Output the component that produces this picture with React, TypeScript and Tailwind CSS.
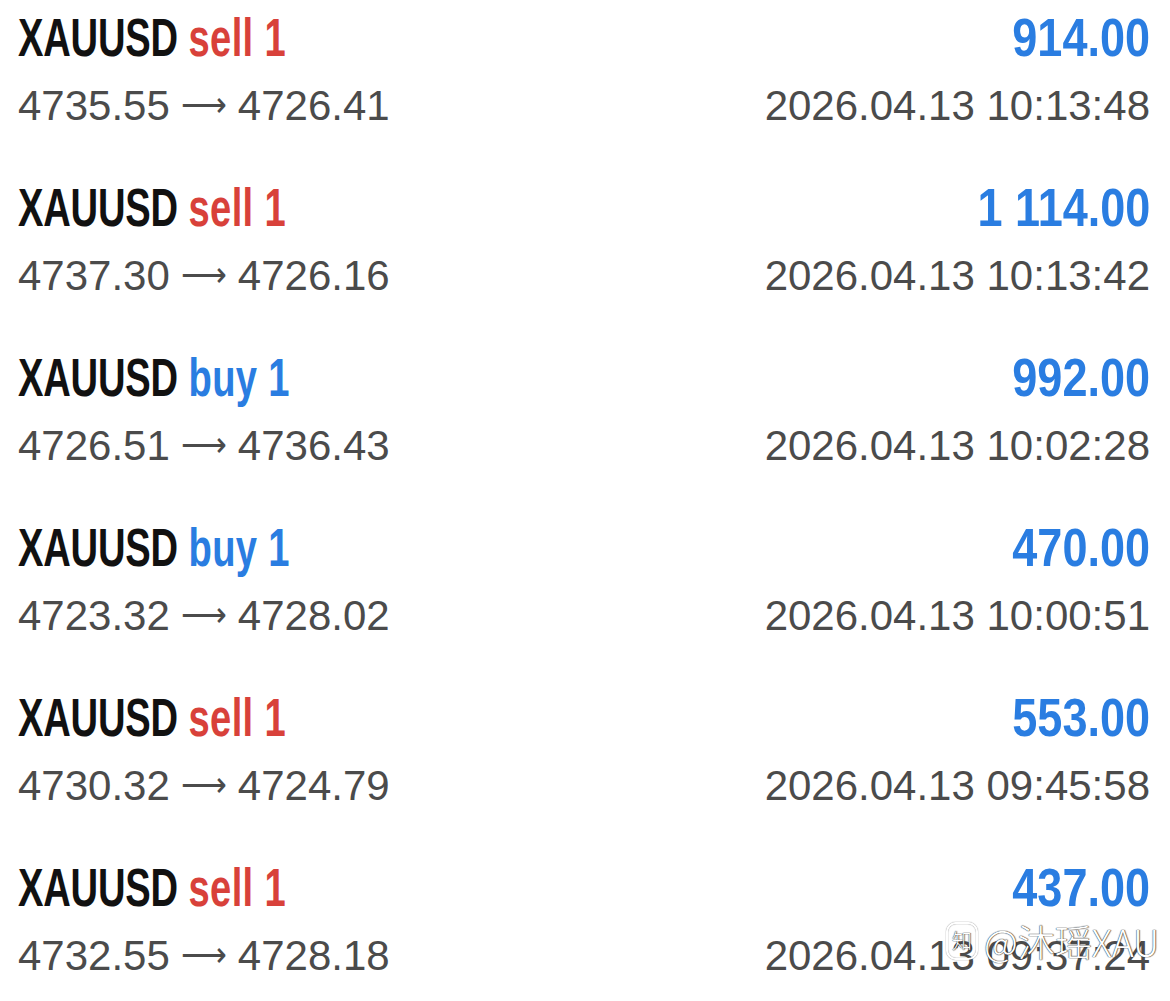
import React from "react";

const DEALS = [
  { side: "sell", open: "4735.55", close: "4726.41", profit: "914.00", time: "2026.04.13 10:13:48" },
  { side: "sell", open: "4737.30", close: "4726.16", profit: "1 114.00", time: "2026.04.13 10:13:42" },
  { side: "buy", open: "4726.51", close: "4736.43", profit: "992.00", time: "2026.04.13 10:02:28" },
  { side: "buy", open: "4723.32", close: "4728.02", profit: "470.00", time: "2026.04.13 10:00:51" },
  { side: "sell", open: "4730.32", close: "4724.79", profit: "553.00", time: "2026.04.13 09:45:58" },
  { side: "sell", open: "4732.55", close: "4728.18", profit: "437.00", time: "2026.04.13 09:37:24" },
];

const bold = "font-['Liberation_Sans',Arial,sans-serif] font-bold";
const regular = "font-['Liberation_Sans',Arial,sans-serif]";

export default function App() {
  return (
    <div className="relative w-[1170px] h-[1001px] overflow-hidden bg-white">
      <div className="flex flex-col pl-[18px] pr-[20px]">
        {DEALS.map((d, i) => (
          <div key={i} className="h-[170px] flex flex-col">
            <div className="flex items-baseline justify-between h-[76px] pt-[2px]">
              {/* condensed title: no narrow face installed, so squeeze the bold one */}
              <div className={`${bold} text-[53px] leading-[72px] inline-block origin-left scale-x-[0.72] whitespace-nowrap`}>
                <span className="text-[#111111] tracking-[-0.3px]">XAUUSD</span>{" "}
                <span className={d.side === "sell" ? "text-[#d8413a] tracking-[0.5px]" : "text-[#2a7de1] tracking-[0.5px]"}>
                  {d.side} 1
                </span>
              </div>
              <div className={`${bold} text-[53px] leading-[72px] text-[#2a7de1] inline-block origin-right scale-x-[0.85] whitespace-nowrap`}>
                {d.profit}
              </div>
            </div>
            <div className={`flex items-baseline justify-between ${regular} text-[42px] leading-[60px] text-[#4b4b4b]`}>
              <span className="whitespace-nowrap">
                {d.open}
                <span className="relative -top-[4px] font-['DejaVu_Sans',sans-serif] font-extralight text-[32px] mx-[11px]">⟶</span>
                {d.close}
              </span>
              <span>{d.time}</span>
            </div>
          </div>
        ))}
      </div>

      {/* watermark */}
      <div className="absolute left-[946px] top-[922px] flex items-center gap-[6px] text-white font-['Noto_Sans_CJK_SC',sans-serif] font-light text-[37px] leading-none [text-shadow:0_0_1px_#333,0_0_1px_#333,1px_0_1px_rgba(0,0,0,0.35)]">
        <span className="inline-flex items-center justify-center w-[32px] h-[38px] rounded-[10px] border-[2px] border-white text-[20px] [box-shadow:0_0_1px_#333,inset_0_0_1px_#333]">
          知
        </span>
        <span>@沐瑶XAU</span>
      </div>
    </div>
  );
}
